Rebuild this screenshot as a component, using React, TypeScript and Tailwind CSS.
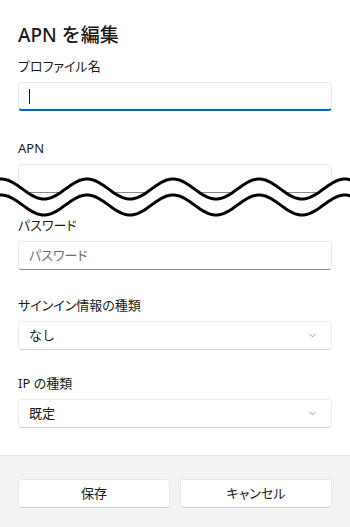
import { ChevronDown } from "lucide-react"

const font = { fontFamily: "'Noto Sans', 'Noto Sans CJK JP', sans-serif" }

// wavy "cut" marker drawn over the form
function Wave() {
    const top: [number, number][] = []
    const low: [number, number][] = []
    for (let x = -4; x <= 354; x += 2) {
        const y = 24 - 10 * Math.cos((2 * Math.PI * (x - 87)) / 86)
        top.push([x, y])
        low.push([x, y + 16])
    }
    const line = (pts: [number, number][]) => pts.map(([x, y], i) => `${i ? "L" : "M"}${x} ${y.toFixed(2)}`).join(" ")
    const fill = line(top) + " " + [...low].reverse().map(([x, y]) => `L${x} ${y.toFixed(2)}`).join(" ") + " Z"
    return (
        <svg className="absolute left-0 top-[165px]" width={350} height={60} viewBox="0 0 350 60">
            <path d={fill} fill="#fff" />
            <path d={line(top)} fill="none" stroke="#000" strokeWidth={3} />
            <path d={line(low)} fill="none" stroke="#000" strokeWidth={3} />
        </svg>
    )
}

const Label = ({ text }: { text: string }) => (
    <div className="h-5 leading-5 text-[13px] text-[#1b1b1b] mb-[6px] [font-feature-settings:'palt']">{text}</div>
)

const TextBox = ({ placeholder, focused }: { placeholder?: string, focused?: boolean }) => (
    <div className={`relative h-[29px] rounded-[4px] bg-white border border-[#e8e8e8] flex items-center px-[10px] ${focused ? "border-b-2 border-b-[#0067c0]" : "border-b-[#8a8a8a]"}`}>
        {focused && <div className="w-px h-[15px] bg-[#1b1b1b]" />}
        {placeholder && <span className="text-[13px] text-[#707070] [font-feature-settings:'palt']">{placeholder}</span>}
    </div>
)

const Select = ({ value }: { value: string }) => (
    <div className="h-[29px] rounded-[4px] bg-white border border-[#ececec] border-b-[#d4d4d4] flex items-center justify-between pl-[10px] pr-[13px]">
        <span className="text-[13px] text-[#1b1b1b]">{value}</span>
        <ChevronDown size={11} strokeWidth={1.5} color="#6b6b6b" />
    </div>
)

const Button = ({ text }: { text: string }) => (
    <button className="flex-1 h-[29px] rounded-[4px] bg-white border border-[#e8e8e8] border-b-[#d0d0d0] text-[13px] text-[#1b1b1b] [font-feature-settings:'palt']">
        {text}
    </button>
)

export default function App() {
    return (
        <div style={font} className="relative w-[350px] h-[527px] bg-white flex flex-col overflow-hidden">
            <div className="flex-1 px-[18px] pt-[21px]">
                <h1 className="h-7 leading-7 text-[19px] font-medium text-[#1b1b1b]">APN を編集</h1>
                <div className="mt-[7px]">
                    <Label text="プロファイル名" />
                    <TextBox focused />
                </div>
                <div className="mt-[27px]">
                    <Label text="APN" />
                    <TextBox />
                </div>
                <div className="mt-[22px]">
                    <Label text="パスワード" />
                    <TextBox placeholder="パスワード" />
                </div>
                <div className="mt-[25px]">
                    <Label text="サインイン情報の種類" />
                    <Select value="なし" />
                </div>
                <div className="mt-[23px]">
                    <Label text="IP の種類" />
                    <Select value="既定" />
                </div>
            </div>
            <div className="h-[72px] bg-[#f3f3f3] border-t border-[#e5e5e5] px-[18px] pt-[23px] flex gap-[10px] items-start">
                <Button text="保存" />
                <Button text="キャンセル" />
            </div>
            <Wave />
        </div>
    )
}
